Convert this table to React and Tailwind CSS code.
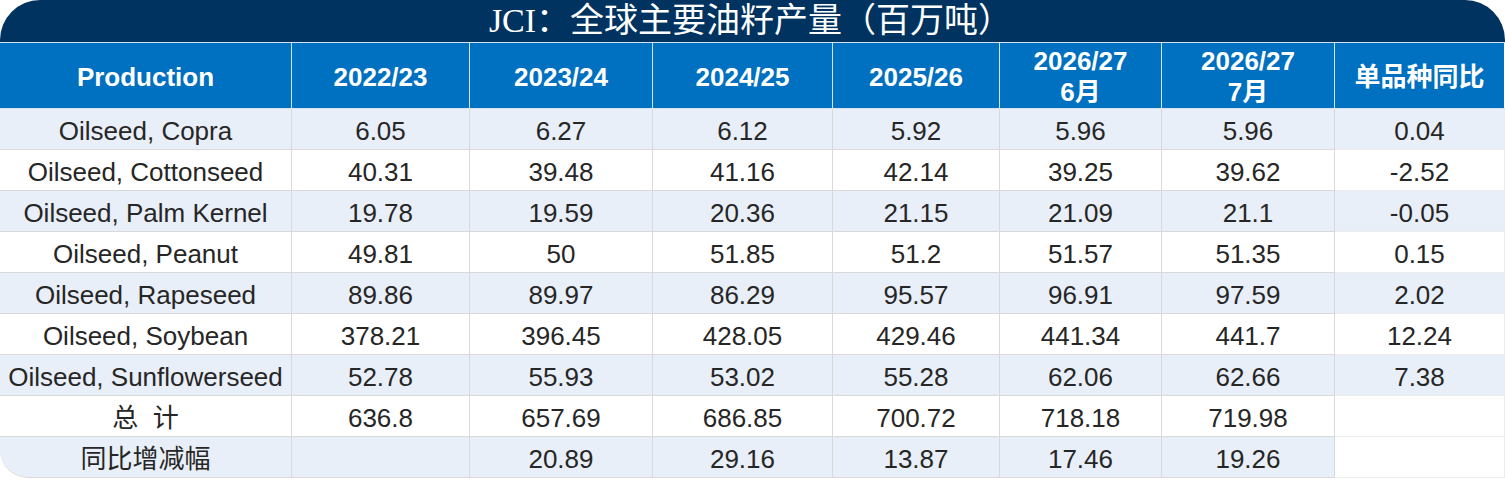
import React from 'react';

const cols = 'grid grid-cols-[292px_178px_183px_180px_167px_162px_173px_170px]';

const rows = [
  ['Oilseed, Copra', '6.05', '6.27', '6.12', '5.92', '5.96', '5.96', '0.04'],
  ['Oilseed, Cottonseed', '40.31', '39.48', '41.16', '42.14', '39.25', '39.62', '-2.52'],
  ['Oilseed, Palm Kernel', '19.78', '19.59', '20.36', '21.15', '21.09', '21.1', '-0.05'],
  ['Oilseed, Peanut', '49.81', '50', '51.85', '51.2', '51.57', '51.35', '0.15'],
  ['Oilseed, Rapeseed', '89.86', '89.97', '86.29', '95.57', '96.91', '97.59', '2.02'],
  ['Oilseed, Soybean', '378.21', '396.45', '428.05', '429.46', '441.34', '441.7', '12.24'],
  ['Oilseed, Sunflowerseed', '52.78', '55.93', '53.02', '55.28', '62.06', '62.66', '7.38'],
  ['总\u00a0\u00a0计', '636.8', '657.69', '686.85', '700.72', '718.18', '719.98', ''],
  ['同比增减幅', '', '20.89', '29.16', '13.87', '17.46', '19.26', ''],
];

const headers = [
  ['Production'],
  ['2022/23'],
  ['2023/24'],
  ['2024/25'],
  ['2025/26'],
  ['2026/27', '6月'],
  ['2026/27', '7月'],
  ['单品种同比'],
];

export default function App() {
  return (
    <div className="w-[1505px] h-[481px] bg-white font-['Liberation_Sans','Noto_Sans_CJK_SC',sans-serif] text-[#262626]">
      <div className="h-[42px] bg-[#00335f] rounded-t-[40px] flex items-center justify-center text-white text-[34px] leading-none font-['Liberation_Serif','Noto_Sans_CJK_SC',serif] pr-[4px]">
        JCI：全球主要油籽产量（百万吨）
      </div>

      <div className={`${cols} h-[67px] bg-[#0070c0] border-y border-[#d6e2ef] text-white font-bold text-[26px] leading-[31px]`}>
        {headers.map((h, i) => (
          <div
            key={i}
            className={`flex flex-col items-center justify-center pt-[3px] ${i < 7 ? 'border-r border-[#d6e2ef]' : 'border-r border-white'}`}
          >
            {h.map((line, j) => (
              <span key={j}>{line}</span>
            ))}
          </div>
        ))}
      </div>

      {rows.map((r, ri) => {
        const striped = ri % 2 === 0;
        const last = ri === rows.length - 1;
        return (
          <div key={ri} className={`${cols} h-[41px] text-[26px] leading-none`}>
            {r.map((c, ci) => {
              const bg = striped && !(ci === 7 && ri >= 7) ? 'bg-[#e9eff8]' : 'bg-white';
              const border = ci < 7 ? 'border-r border-[#d9d9d9]' : 'border-r border-[#ececec]';
              const corner = last && ci === 0 ? 'rounded-bl-[28px]' : '';
              return (
                <div
                  key={ci}
                  className={`flex items-center justify-center pt-[3px] border-b border-[#d9d9d9] ${bg} ${border} ${corner}`}
                >
                  {c}
                </div>
              );
            })}
          </div>
        );
      })}
    </div>
  );
}
